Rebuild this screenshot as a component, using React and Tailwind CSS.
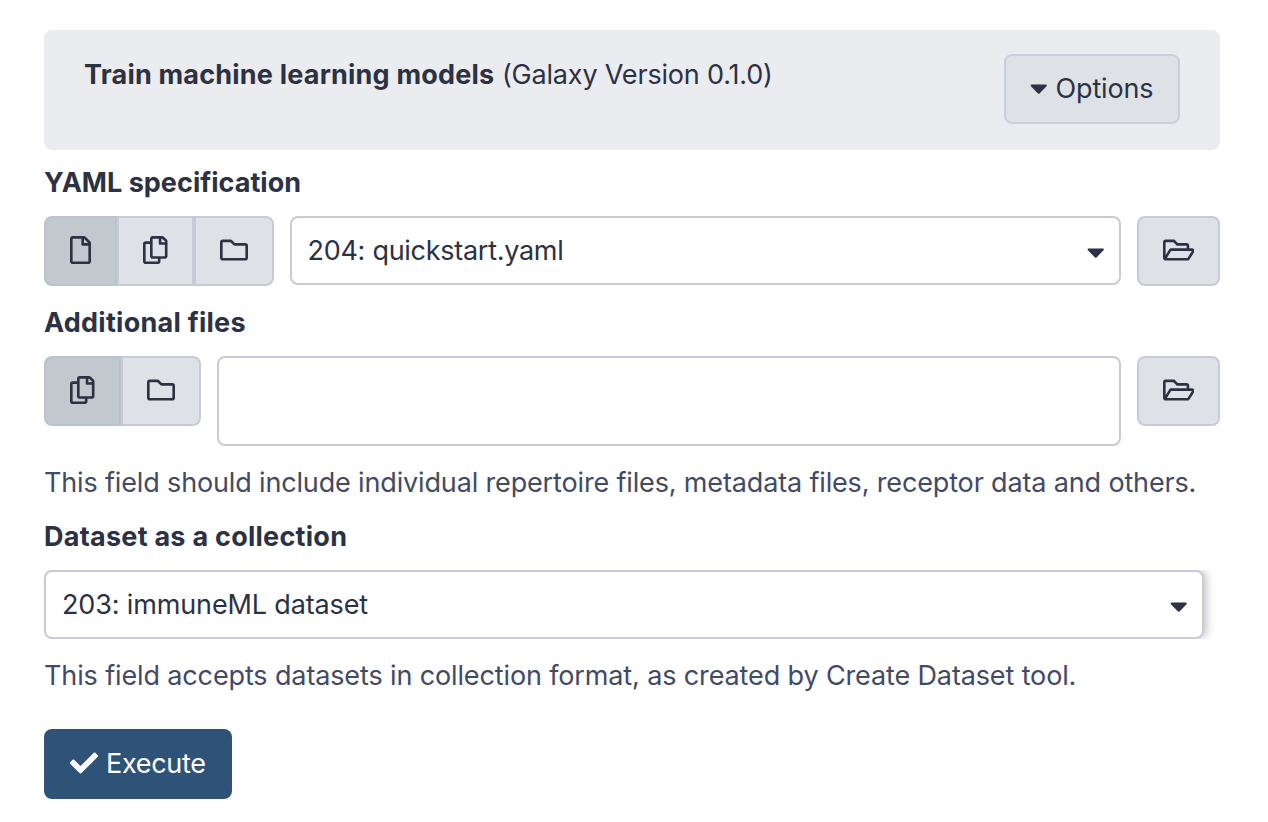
import {
  FaRegFile,
  FaRegCopy,
  FaRegFolder,
  FaRegFolderOpen,
  FaCheck,
  FaCaretDown,
} from "react-icons/fa";

const ICONS = { file: FaRegFile, copy: FaRegCopy, folder: FaRegFolder };
const ICON_WIDTHS = { file: "w-[21px]", copy: "w-[24.5px]", folder: "w-[28px]" };
const WIDTHS = { file: "w-[73px]", copy: "w-[76.5px]", folder: "w-[80px]" };

function Glyph({ icon: Icon, className = "" }) {
  return <Icon className={`h-[28px] shrink-0 ${className}`} />;
}

function SourceButtons({ kinds }) {
  return (
    <div className="flex h-[70px] shrink-0">
      {kinds.map((kind, i) => (
        <button
          key={kind}
          type="button"
          aria-label={kind}
          className={`flex items-center justify-center border-2 pb-[3px] ${WIDTHS[kind]} ${
            i === 0
              ? "rounded-l-[8px] border-[#bac3ca] bg-[#c1c8ce]"
              : "border-[#c8cadb] bg-[#dee2e6]"
          } ${i === kinds.length - 1 ? "rounded-r-[8px]" : ""}`}
        >
          <Glyph icon={ICONS[kind]} className={ICON_WIDTHS[kind]} />
        </button>
      ))}
    </div>
  );
}

function BrowseButton() {
  return (
    <button
      type="button"
      aria-label="browse"
      className="flex h-[70px] w-[83px] shrink-0 items-center justify-center rounded-[8px] border-2 border-[#c8cadb] bg-[#dee2e6] pb-[3px]"
    >
      <Glyph icon={FaRegFolderOpen} className="w-[31.5px]" />
    </button>
  );
}

function Select({ children, className = "" }) {
  return (
    <div
      className={`flex h-[69px] items-center justify-between rounded-[8px] border-2 border-[#c8cadb] bg-white pr-[14.5px] pl-4 ${className}`}
    >
      <span>{children}</span>
      <Glyph icon={FaCaretDown} className="mt-[2px] w-[17.5px]" />
    </div>
  );
}

function Label({ children, className = "tracking-[0.26px]" }) {
  return <div className={`h-[34px] font-bold ${className}`}>{children}</div>;
}

export default function App() {
  return (
    <main className="flex h-[822px] w-[1268px] flex-col bg-white pt-[30px] pr-[48px] pl-[44px] font-['Inter',sans-serif] text-[27px] leading-[34px] tracking-[-0.14px] whitespace-nowrap text-[#2c3143]">
      <header className="flex h-[120px] items-start justify-between rounded-[8px] bg-[#ebecef] pt-[24px] pr-[40px] pl-[40px]">
        <div className="pt-[4px]">
          <span className="font-bold tracking-[0.2px]">Train machine learning models</span>{" "}
          <span className="tracking-[-0.18px]">(Galaxy Version 0.1.0)</span>
        </div>
        <button
          type="button"
          className="flex h-[70px] w-[176px] items-center rounded-[8px] border-2 border-[#c8cfde] bg-[#dee2e6] pl-[24px]"
        >
          <Glyph icon={FaCaretDown} className="mb-[2px] w-[17.5px]" />
          <span className="ml-[8px]">Options</span>
        </button>
      </header>

      <section className="pt-[16px]">
        <Label className="tracking-[0.02px]">YAML specification</Label>
        <div className="mt-[16px] flex gap-[16px]">
          <SourceButtons kinds={["file", "copy", "folder"]} />
          <Select className="flex-1 tracking-[-0.28px]">204: quickstart.yaml</Select>
          <BrowseButton />
        </div>
      </section>

      <section className="pt-[20px]">
        <Label>Additional files</Label>
        <div className="mt-[16px] flex gap-[16px]">
          <SourceButtons kinds={["copy", "folder"]} />
          <div className="h-[90px] flex-1 rounded-[8px] border-2 border-[#c8cadb] bg-white" />
          <BrowseButton />
        </div>
        <p className="mt-[20px] tracking-[-0.152px] text-[#434a65]">
          This field should include individual repertoire files, metadata files, receptor data and others.
        </p>
      </section>

      <section className="pt-[20px]">
        <Label>Dataset as a collection</Label>
        <div className="mt-[16px] overflow-x-visible overflow-y-clip">
          <Select className="w-[1160px] shadow-[4px_0_8px_-1px_rgba(0,0,0,0.22)]">203: immuneML dataset</Select>
        </div>
        <p className="mt-[20px] tracking-[-0.13px] text-[#434a65]">
          This field accepts datasets in collection format, as created by Create Dataset tool.
        </p>
      </section>

      <button
        type="button"
        className="mt-[36px] flex h-[70px] w-[188px] items-center rounded-[8px] bg-[#2f5377] pl-[26px] text-white"
      >
        <Glyph icon={FaCheck} className="mb-[2px] w-[28px]" />
        <span className="ml-[8px] tracking-[-0.3px]">Execute</span>
      </button>
    </main>
  );
}
